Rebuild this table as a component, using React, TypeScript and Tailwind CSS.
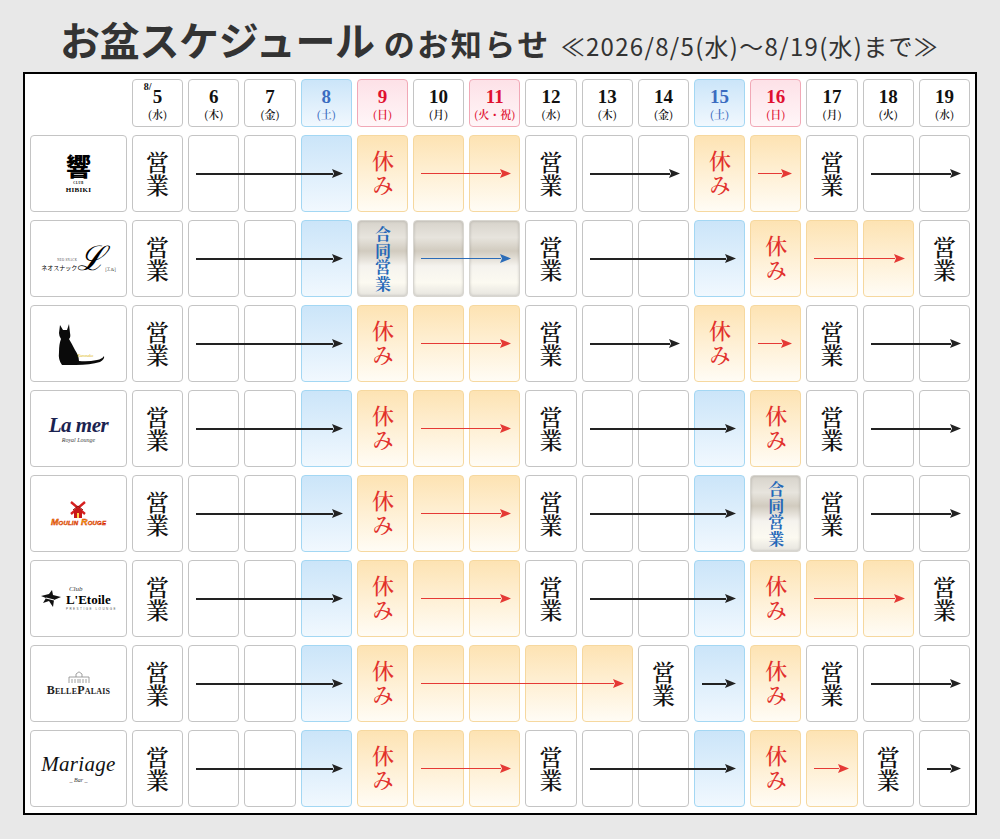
import { type CSSProperties, type ReactNode } from 'react';

const SERIF = "font-['Noto_Serif_CJK_JP','Liberation_Serif','Noto_Sans_CJK_JP',serif]";
const SANS = "font-['Noto_Sans_CJK_JP','Noto_Sans',sans-serif]";

type Kind = 'w' | 'b' | 'p' | 'o' | 's';
type ArrowColor = 'k' | 'r' | 'u';

const KIND_CLASS: Record<Kind, string> = {
  w: 'border-[#c4c4c4] bg-white',
  b: 'border-[#a3d7f3] bg-linear-to-b from-[#cbe5f9] to-[#f1f8fe]',
  p: 'border-[#f1a8b6] bg-linear-to-b from-[#fde1e7] to-[#fff6f8]',
  o: 'border-[#f6d89f] bg-linear-to-b from-[#fde3b3] to-[#fffcf5]',
  s: 'border-[#d8d6d0] bg-[linear-gradient(180deg,#d7d3cb_0%,#e7e4dd_22%,#d1cbbf_40%,#f5f3ee_60%,#fcfaf1_82%,#e6e4de_100%)] shadow-[inset_0_0_3px_rgba(0,0,0,0.18)]',
};

const ARROW_CLASS: Record<ArrowColor, { line: string; fill: string }> = {
  k: { line: 'h-[2px] bg-[#222]', fill: '#222' },
  r: { line: 'h-[1.5px] bg-[#e53935]', fill: '#e53935' },
  u: { line: 'h-[1.5px] bg-[#2b6cb8]', fill: '#2b6cb8' },
};

const DAYS: { d: string; w: string; kind: Kind; color: string }[] = [
  { d: '5', w: '水', kind: 'w', color: 'text-[#111]' },
  { d: '6', w: '木', kind: 'w', color: 'text-[#111]' },
  { d: '7', w: '金', kind: 'w', color: 'text-[#111]' },
  { d: '8', w: '土', kind: 'b', color: 'text-[#3a6cc0]' },
  { d: '9', w: '日', kind: 'p', color: 'text-[#e01030]' },
  { d: '10', w: '月', kind: 'w', color: 'text-[#111]' },
  { d: '11', w: '火・祝', kind: 'p', color: 'text-[#e01030]' },
  { d: '12', w: '水', kind: 'w', color: 'text-[#111]' },
  { d: '13', w: '木', kind: 'w', color: 'text-[#111]' },
  { d: '14', w: '金', kind: 'w', color: 'text-[#111]' },
  { d: '15', w: '土', kind: 'b', color: 'text-[#3a6cc0]' },
  { d: '16', w: '日', kind: 'p', color: 'text-[#e01030]' },
  { d: '17', w: '月', kind: 'w', color: 'text-[#111]' },
  { d: '18', w: '火', kind: 'w', color: 'text-[#111]' },
  { d: '19', w: '水', kind: 'w', color: 'text-[#111]' },
];

// O=営業 H=休み J=合同営業 (w/b/o/s = plain backgrounds)
interface Row {
  logo: ReactNode;
  cells: string;
  arrows: [number, number, ArrowColor][];
}

function HibikiLogo() {
  return (
    <div className="flex flex-col items-center leading-none">
      <span className={`${SANS} text-[25px] font-black leading-none text-black`}>響</span>
      <span className="mt-[4px] font-['Liberation_Serif'] text-[3px] font-bold leading-none tracking-[0.5px]">CLUB</span>
      <span className="mt-[2px] font-['Liberation_Serif'] text-[7px] font-bold leading-none tracking-[0.3px] text-black">HIBIKI</span>
    </div>
  );
}

function NeoLogo() {
  return (
    <div className="flex items-end leading-none">
      <div className="flex flex-col items-end">
        <span className="font-['Liberation_Serif'] text-[3px] tracking-[0.3px] text-[#444]">NEO SNACK</span>
        <span className={`${SANS} mb-[3px] mt-[3px] text-[6px] text-black`}>ネオスナック</span>
      </div>
      <span className="font-['DejaVu_Serif',serif] text-[34px] italic leading-[0.9] text-black">ℒ</span>
      <span className={`${SANS} mb-[3px] text-[4px] text-black`}>[エル]</span>
    </div>
  );
}

function CatLogo() {
  return (
    <div className="relative">
      <svg width="54" height="44" viewBox="0 0 54 44">
        <path
          d="M8 3 L11 8 L15 8 L17 2 L18 11 Q19 15 17 17 Q20 22 23 28 Q27 34 27 39 Q36 40 45 38 Q50 37 52 34 Q53 37 48 40 Q38 43 24 43 L10 43 Q6 38 7 30 Q7 22 9 17 Q7 14 7 11 Z"
          fill="#0a0a0a"
        />
      </svg>
      <span className="absolute left-[26px] top-[31px] font-['Liberation_Serif'] text-[4px] italic text-[#d9b100]">
        Kuroneko
      </span>
    </div>
  );
}

function LaMerLogo() {
  return (
    <div className="flex flex-col items-center leading-none">
      <span className="font-['Liberation_Serif'] text-[21px] font-bold italic tracking-[-0.5px] text-[#1b2350]">
        La mer
      </span>
      <span className="mt-[1px] font-['Liberation_Serif'] text-[6px] italic text-[#444]">Royal Lounge</span>
    </div>
  );
}

function MoulinLogo() {
  return (
    <div className="flex flex-col items-center leading-none">
      <svg width="18" height="17" viewBox="0 0 18 17">
        <path d="M2 1 L16 13 M16 1 L2 13" stroke="#d62020" strokeWidth="2.4" />
        <path d="M5 9 L9 6 L13 9 L13 17 L5 17 Z" fill="#c81818" />
        <path d="M4 9 L9 5 L14 9" stroke="#8a0e0e" strokeWidth="1" fill="none" />
        <rect x="8" y="12" width="2" height="5" fill="#ffd54a" />
      </svg>
      <span className="font-['Liberation_Sans'] text-[9px] font-bold italic tracking-[0.2px] text-[#f7b400] [-webkit-text-stroke:0.4px_#d01010] [font-variant:small-caps]">
        Moulin Rouge
      </span>
    </div>
  );
}

function EtoileLogo() {
  return (
    <div className="flex items-center gap-[4px] leading-none">
      <svg width="22" height="18" viewBox="0 0 22 18">
        <path d="M1 6 L9 4 L12 0 L13 5 L21 7 L14 10 L13 17 L9 11 L3 13 L6 8 Z" fill="#111" />
        <path d="M6 8 L14 10" stroke="#fff" strokeWidth="1.2" />
      </svg>
      <div className="flex flex-col items-start">
        <span className="ml-[3px] font-['Liberation_Serif'] text-[7px] italic text-[#333]">Club</span>
        <span className="font-['Liberation_Serif'] text-[13px] font-bold text-black">L'Etoile</span>
        <span className="mt-[2px] font-['Liberation_Sans'] text-[3px] tracking-[1.5px] text-[#555]">PRESTIGE LOUNGE</span>
      </div>
    </div>
  );
}

function BelleLogo() {
  return (
    <div className="flex flex-col items-center leading-none">
      <svg width="26" height="12" viewBox="0 0 26 12">
        <path d="M3 12 L3 6 L23 6 L23 12 M10 6 L10 3 L13 0.8 L16 3 L16 6 M6 12 L6 8 M9 12 L9 8 M12 12 L12 8 M14 12 L14 8 M17 12 L17 8 M20 12 L20 8" stroke="#888" strokeWidth="0.8" fill="none" />
      </svg>
      <span className="mt-[1px] font-['Liberation_Serif'] text-[12px] font-bold tracking-[0.2px] text-[#222] [font-variant:small-caps]">
        BellePalais
      </span>
    </div>
  );
}

function MariageLogo() {
  return (
    <div className="flex flex-col items-center leading-none">
      <span className="font-['Liberation_Serif'] text-[21px] italic tracking-[0.3px] text-[#111]">Mariage</span>
      <span className="mt-[2px] font-['Liberation_Serif'] text-[6px] italic text-[#333]">_ Bar _</span>
    </div>
  );
}

const ROWS: Row[] = [
  { logo: <HibikiLogo />, cells: 'OwwbHooOwwHoOww', arrows: [[1, 3, 'k'], [5, 6, 'r'], [8, 9, 'k'], [11, 11, 'r'], [13, 14, 'k']] },
  { logo: <NeoLogo />, cells: 'OwwbJssOwwbHooO', arrows: [[1, 3, 'k'], [5, 6, 'u'], [8, 10, 'k'], [12, 13, 'r']] },
  { logo: <CatLogo />, cells: 'OwwbHooOwwHoOww', arrows: [[1, 3, 'k'], [5, 6, 'r'], [8, 9, 'k'], [11, 11, 'r'], [13, 14, 'k']] },
  { logo: <LaMerLogo />, cells: 'OwwbHooOwwbHOww', arrows: [[1, 3, 'k'], [5, 6, 'r'], [8, 10, 'k'], [13, 14, 'k']] },
  { logo: <MoulinLogo />, cells: 'OwwbHooOwwbJOww', arrows: [[1, 3, 'k'], [5, 6, 'r'], [8, 10, 'k'], [13, 14, 'k']] },
  { logo: <EtoileLogo />, cells: 'OwwbHooOwwbHooO', arrows: [[1, 3, 'k'], [5, 6, 'r'], [8, 10, 'k'], [12, 13, 'r']] },
  { logo: <BelleLogo />, cells: 'OwwbHooooObHOww', arrows: [[1, 3, 'k'], [5, 8, 'r'], [10, 10, 'k'], [13, 14, 'k']] },
  { logo: <MariageLogo />, cells: 'OwwbHooOwwbHoOw', arrows: [[1, 3, 'k'], [5, 6, 'r'], [8, 10, 'k'], [12, 12, 'r'], [14, 14, 'k']] },
];

function VText({ text, className }: { text: string; className: string }) {
  return <span className={`${SERIF} leading-none [text-orientation:upright] [writing-mode:vertical-rl] ${className}`}>{text}</span>;
}

function BodyCell({ code, style }: { code: string; style: CSSProperties }) {
  let kind: Kind = 'w';
  let content: ReactNode = null;
  if (code === 'O') {
    content = <VText text="営業" className="text-[23px] font-semibold text-[#111]" />;
  } else if (code === 'H') {
    kind = 'o';
    content = <VText text="休み" className="text-[22px] font-medium tracking-[2px] text-[#e2302c]" />;
  } else if (code === 'J') {
    kind = 's';
    content = <VText text="合同営業" className="text-[16px] font-bold tracking-[0.5px] text-[#2468b8]" />;
  } else {
    kind = code as Kind;
  }
  return (
    <div style={style} className={`flex items-center justify-center rounded-[4px] border ${KIND_CLASS[kind]}`}>
      {content}
    </div>
  );
}

function Arrow({ from, to, color }: { from: number; to: number; color: ArrowColor }) {
  const c = ARROW_CLASS[color];
  return (
    <div
      style={{ gridColumn: `${from + 2} / ${to + 3}`, gridRow: 1 }}
      className="z-10 ml-[8px] mr-[9px] flex items-center self-center"
    >
      <div className={`flex-1 ${c.line}`} />
      <svg width="11" height="9" viewBox="0 0 11 9" className="-ml-[1px] shrink-0">
        <polygon points="0,0 11,4.5 0,9 2,4.5" fill={c.fill} />
      </svg>
    </div>
  );
}

const GRID = 'grid grid-cols-[97px_repeat(15,minmax(0,1fr))] gap-x-[5px]';

export default function App() {
  return (
    <div className="h-[839px] w-[1000px] overflow-hidden bg-[#e8e8e8]">
      <div className={`${SANS} flex h-[72px] items-baseline whitespace-nowrap pl-[60px] pt-[19px] text-[#333]`}>
        <span className="text-[40px] font-bold leading-none tracking-[-0.3px]">お盆スケジュール</span>
        <span className="ml-[9px] text-[31px] font-bold leading-none tracking-[2.5px]">のお知らせ</span>
        <span className="ml-[10px] text-[24px] leading-none tracking-[1.3px]">≪2026/8/5(水)〜8/19(水)まで≫</span>
      </div>

      <div className="mx-[23px] flex flex-col gap-y-[8px] border-2 border-black bg-white px-[5px] pb-[6px] pt-[5px]">
        <div className={`${GRID} h-[48px]`}>
          <div />
          {DAYS.map((day) => (
            <div
              key={day.d}
              className={`flex flex-col items-center justify-center rounded-[4px] border ${KIND_CLASS[day.kind]} ${day.color}`}
            >
              <span className="relative font-['Liberation_Serif'] text-[19px] font-bold leading-none">
                {day.d === '5' && (
                  <span className="absolute -left-[9px] -top-[5px] text-[10px] font-bold">8/</span>
                )}
                {day.d}
              </span>
              <span className={`${SERIF} mt-[3px] whitespace-nowrap text-[11px] font-semibold leading-none`}>
                ({day.w})
              </span>
            </div>
          ))}
        </div>

        {ROWS.map((row, r) => (
          <div key={r} className={`${GRID} h-[77px]`}>
            <div
              style={{ gridColumn: 1, gridRow: 1 }}
              className="flex items-center justify-center rounded-[4px] border border-[#c4c4c4] bg-white"
            >
              {row.logo}
            </div>
            {row.cells.split('').map((code, i) => (
              <BodyCell key={i} code={code} style={{ gridColumn: i + 2, gridRow: 1 }} />
            ))}
            {row.arrows.map(([from, to, color], i) => (
              <Arrow key={`a${i}`} from={from} to={to} color={color} />
            ))}
          </div>
        ))}
      </div>
    </div>
  );
}
